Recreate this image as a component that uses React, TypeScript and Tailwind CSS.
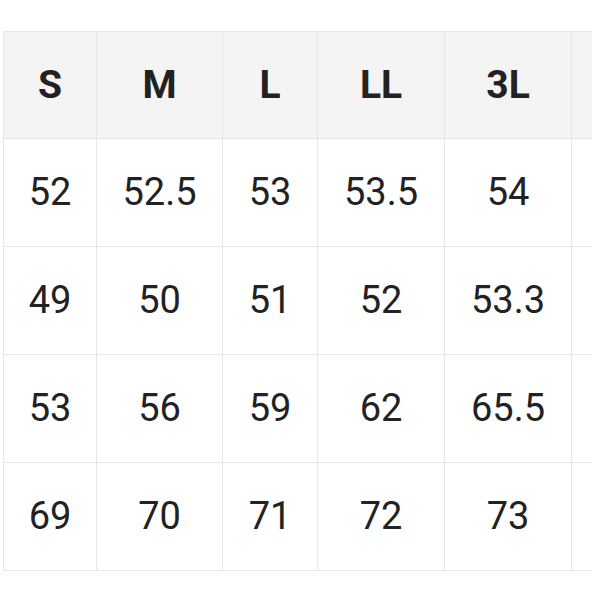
const headers = ["S", "M", "L", "LL", "3L", ""];
const rows = [
  ["52", "52.5", "53", "53.5", "54", ""],
  ["49", "50", "51", "52", "53.3", ""],
  ["53", "56", "59", "62", "65.5", ""],
  ["69", "70", "71", "72", "73", ""],
];

export default function App() {
  return (
    <div className="w-[592px] h-[592px] overflow-hidden bg-white pt-[31px] pl-[3px] font-['Roboto',sans-serif] text-[#222]">
      <div className="grid w-[700px] grid-cols-[93px_126px_95px_127px_127px_132px] border-b border-[#e6e6e6]">
        {headers.map((h, i) => (
          <div
            key={"h" + i}
            className="h-[107px] flex items-center justify-center border-l border-t border-[#e6e6e6] bg-[#f4f4f4] text-[39px] font-bold"
          >
            {h}
          </div>
        ))}
        {rows.map((r, ri) =>
          r.map((c, ci) => (
            <div
              key={ri + "-" + ci}
              className="h-[108px] flex items-center justify-center border-l border-t border-[#e6e6e6] text-[38px]"
            >
              {c}
            </div>
          ))
        )}
      </div>
    </div>
  );
}
